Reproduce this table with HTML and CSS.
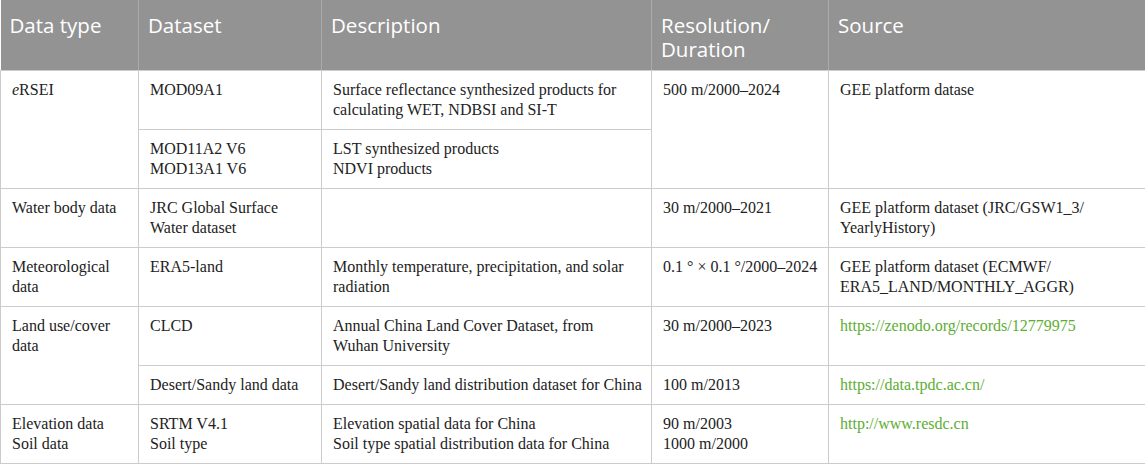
FILE: index.html
```html
<!DOCTYPE html>
<html lang="en">
<head>
    <meta charset="UTF-8">
    <meta name="viewport" content="width=device-width, initial-scale=1.0">
    <title>Data sources</title>
    <link rel="stylesheet" href="styles.css">
</head>
<body>
    <table class="data-table">
        <colgroup>
            <col class="col-type">
            <col class="col-dataset">
            <col class="col-desc">
            <col class="col-res">
            <col class="col-source">
        </colgroup>
        <thead>
            <tr>
                <th>Data type</th>
                <th>Dataset</th>
                <th>Description</th>
                <th>Resolution/<br>Duration</th>
                <th>Source</th>
            </tr>
        </thead>
        <tbody>
            <tr>
                <td rowspan="2"><i>e</i>RSEI</td>
                <td>MOD09A1</td>
                <td>Surface reflectance synthesized products for calculating WET, NDBSI and SI-T</td>
                <td rowspan="2">500 m/2000–2024</td>
                <td rowspan="2">GEE platform datase</td>
            </tr>
            <tr>
                <td>MOD11A2 V6<br>MOD13A1 V6</td>
                <td>LST synthesized products<br>NDVI products</td>
            </tr>
            <tr>
                <td>Water body data</td>
                <td>JRC Global Surface Water dataset</td>
                <td></td>
                <td>30 m/2000–2021</td>
                <td>GEE platform dataset (JRC/GSW1_3/<br>YearlyHistory)</td>
            </tr>
            <tr>
                <td>Meteorological data</td>
                <td>ERA5-land</td>
                <td>Monthly temperature, precipitation, and solar radiation</td>
                <td class="nowrap">0.1 ° × 0.1 °/2000–2024</td>
                <td>GEE platform dataset (ECMWF/<br>ERA5_LAND/MONTHLY_AGGR)</td>
            </tr>
            <tr>
                <td rowspan="2">Land use/cover data</td>
                <td>CLCD</td>
                <td>Annual China Land Cover Dataset, from Wuhan University</td>
                <td>30 m/2000–2023</td>
                <td><a href="#">https://zenodo.org/records/12779975</a></td>
            </tr>
            <tr>
                <td>Desert/Sandy land data</td>
                <td class="nowrap">Desert/Sandy land distribution dataset for China</td>
                <td>100 m/2013</td>
                <td><a href="#">https://data.tpdc.ac.cn/</a></td>
            </tr>
            <tr>
                <td>Elevation data<br>Soil data</td>
                <td>SRTM V4.1<br>Soil type</td>
                <td>Elevation spatial data for China<br>Soil type spatial distribution data for China</td>
                <td>90 m/2003<br>1000 m/2000</td>
                <td><a href="#">http://www.resdc.cn</a></td>
            </tr>
        </tbody>
    </table>
</body>
</html>
```

FILE: styles.css
```css
body {
    margin: 0;
    background: #fff;
}
.data-table {
    width: 1145px;
    border-collapse: collapse;
    table-layout: fixed;
}
.col-type { width: 138px; }
.col-dataset { width: 183px; }
.col-desc { width: 330px; }
.col-res { width: 177px; }
.col-source { width: 317px; }
th {
    background: #939393;
    color: #fff;
    font-family: "Open Sans", sans-serif;
    font-weight: normal;
    font-size: 20.5px;
    line-height: 24px;
    text-align: left;
    vertical-align: top;
    padding: 13px 9px 9px 9px;
    border-left: 1px solid #aaa;
    border-bottom: 1px solid #ccc;
}
th:first-child {
    border-left: none;
}
td {
    font-family: "Liberation Serif", serif;
    font-size: 16px;
    line-height: 20px;
    color: #222;
    vertical-align: top;
    padding: 9px 11px;
    border: 1px solid #ccc;
}
td.nowrap {
    white-space: nowrap;
    padding-right: 4px;
}
a {
    color: #5cae33;
    text-decoration: none;
}
```
